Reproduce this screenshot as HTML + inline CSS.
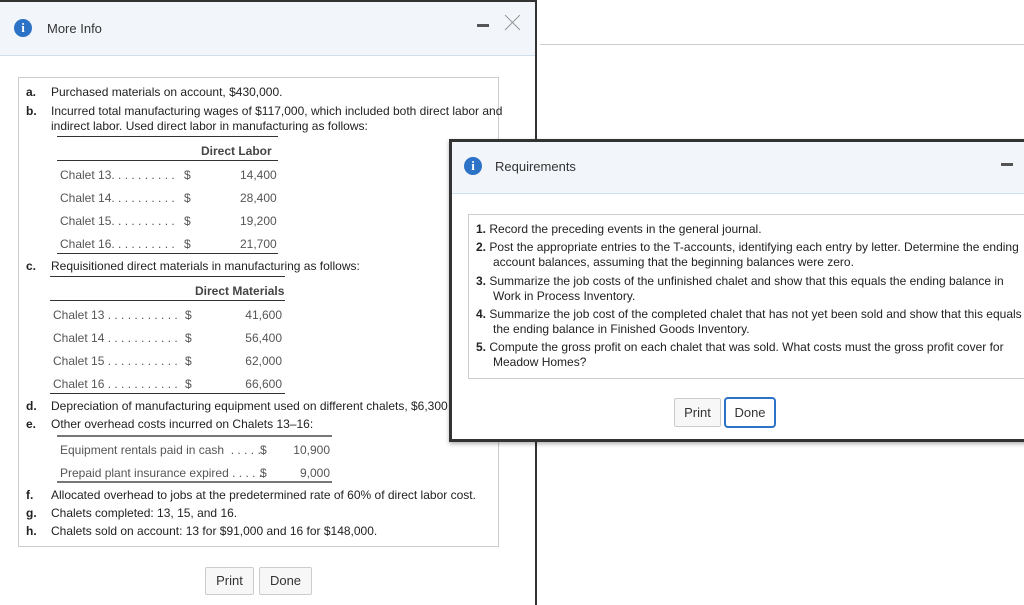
<!DOCTYPE html>
<html><head><style>
*{margin:0;padding:0;box-sizing:border-box}
body{width:1024px;height:605px;overflow:hidden;background:#fff;font-family:"Liberation Sans",sans-serif;color:#222;position:relative;font-size:12px}
.abs{position:absolute;white-space:nowrap}
.hr{position:absolute;height:0;border-top:1px solid #333}
.hrg{position:absolute;height:0;border-top:2px solid #777}
.g{color:#555}
.ic{position:absolute;width:18px;height:18px;border-radius:50%;background:#2c72c7;color:#fff;font:bold 13px "Liberation Serif",serif;text-align:center;line-height:18px}
.btn{position:absolute;border:1px solid #ccc;background:#f7f7f7;border-radius:2px;font-size:13px;color:#333;text-align:center}
.r{font-size:12px;line-height:15px}
</style></head><body>
<div class="abs" style="left:540px;top:44px;width:484px;border-top:1px solid #ccc"></div>
<div style="position:absolute;left:0;top:0;width:537px;height:605px;border-top:2px solid #333;border-right:2px solid #333;background:#fff"></div>
<div style="position:absolute;left:0;top:2px;width:535px;height:54px;background:#f2f6fb;border-bottom:1px solid #cfe0f0"></div>
<div class="ic" style="left:14px;top:19px">i</div>
<div class="abs" style="left:47px;top:21px;font-size:13px;color:#333">More Info</div>
<div class="abs" style="left:477px;top:24px;width:12px;height:3px;background:#555"></div>
<svg class="abs" style="left:504px;top:14px" width="17" height="17"><path d="M1 1L16 16M16 1L1 16" stroke="#999" stroke-width="1"/></svg>
<div style="position:absolute;left:18px;top:77px;width:481px;height:470px;border:1px solid #ccc"></div>
<div class="abs" style="left:26px;top:85px;font-weight:bold">a.</div>
<div class="abs" style="left:51px;top:85px">Purchased materials on account, $430,000.</div>
<div class="abs" style="left:26px;top:104px;font-weight:bold">b.</div>
<div class="abs" style="left:51px;top:104px;line-height:15px">Incurred total manufacturing wages of $117,000, which included both direct labor and<br>indirect labor. Used direct labor in manufacturing as follows:</div>
<div class="hr" style="left:57px;top:136px;width:221px"></div>
<div class="abs" style="left:201px;top:144px;font-weight:bold;color:#444">Direct Labor</div>
<div class="hr" style="left:57px;top:160px;width:221px"></div>
<div class="abs g" style="left:60px;top:168px">Chalet 13. . . . . . . . . .</div><div class="abs g" style="left:184px;top:168px">$</div><div class="abs g" style="left:240px;top:168px;width:36px;text-align:right">14,400</div>
<div class="abs g" style="left:60px;top:191px">Chalet 14. . . . . . . . . .</div><div class="abs g" style="left:184px;top:191px">$</div><div class="abs g" style="left:240px;top:191px;width:36px;text-align:right">28,400</div>
<div class="abs g" style="left:60px;top:214px">Chalet 15. . . . . . . . . .</div><div class="abs g" style="left:184px;top:214px">$</div><div class="abs g" style="left:240px;top:214px;width:36px;text-align:right">19,200</div>
<div class="abs g" style="left:60px;top:237px">Chalet 16. . . . . . . . . .</div><div class="abs g" style="left:184px;top:237px">$</div><div class="abs g" style="left:240px;top:237px;width:36px;text-align:right">21,700</div>
<div class="hr" style="left:57px;top:253px;width:221px"></div>
<div class="abs" style="left:26px;top:259px;font-weight:bold">c.</div>
<div class="abs" style="left:51px;top:259px">Requisitioned direct materials in manufacturing as follows:</div>
<div class="hr" style="left:50px;top:276px;width:235px"></div>
<div class="abs" style="left:195px;top:284px;font-weight:bold;color:#444">Direct Materials</div>
<div class="hr" style="left:50px;top:300px;width:235px"></div>
<div class="abs g" style="left:53px;top:308px">Chalet 13 . . . . . . . . . . .</div><div class="abs g" style="left:185px;top:308px">$</div><div class="abs g" style="left:245px;top:308px;width:37px;text-align:right">41,600</div>
<div class="abs g" style="left:53px;top:331px">Chalet 14 . . . . . . . . . . .</div><div class="abs g" style="left:185px;top:331px">$</div><div class="abs g" style="left:245px;top:331px;width:37px;text-align:right">56,400</div>
<div class="abs g" style="left:53px;top:354px">Chalet 15 . . . . . . . . . . .</div><div class="abs g" style="left:185px;top:354px">$</div><div class="abs g" style="left:245px;top:354px;width:37px;text-align:right">62,000</div>
<div class="abs g" style="left:53px;top:377px">Chalet 16 . . . . . . . . . . .</div><div class="abs g" style="left:185px;top:377px">$</div><div class="abs g" style="left:245px;top:377px;width:37px;text-align:right">66,600</div>
<div class="hr" style="left:50px;top:393px;width:235px"></div>
<div class="abs" style="left:26px;top:399px;font-weight:bold">d.</div>
<div class="abs" style="left:51px;top:399px">Depreciation of manufacturing equipment used on different chalets, $6,300</div>
<div class="abs" style="left:26px;top:417px;font-weight:bold">e.</div>
<div class="abs" style="left:51px;top:417px">Other overhead costs incurred on Chalets 13–16:</div>
<div class="hrg" style="left:57px;top:435px;width:275px"></div>
<div class="abs g" style="left:60px;top:443px">Equipment rentals paid in cash &nbsp;. . . . .</div><div class="abs g" style="left:260px;top:443px">$</div><div class="abs g" style="left:290px;top:443px;width:40px;text-align:right">10,900</div>
<div class="abs g" style="left:60px;top:466px">Prepaid plant insurance expired . . . . .</div><div class="abs g" style="left:260px;top:466px">$</div><div class="abs g" style="left:290px;top:466px;width:40px;text-align:right">9,000</div>
<div class="hrg" style="left:57px;top:481px;width:275px"></div>
<div class="abs" style="left:26px;top:488px;font-weight:bold">f.</div>
<div class="abs" style="left:51px;top:488px">Allocated overhead to jobs at the predetermined rate of 60% of direct labor cost.</div>
<div class="abs" style="left:26px;top:506px;font-weight:bold">g.</div>
<div class="abs" style="left:51px;top:506px">Chalets completed: 13, 15, and 16.</div>
<div class="abs" style="left:26px;top:524px;font-weight:bold">h.</div>
<div class="abs" style="left:51px;top:524px">Chalets sold on account: 13 for $91,000 and 16 for $148,000.</div>
<div class="btn" style="left:205px;top:567px;width:49px;height:28px;line-height:26px">Print</div>
<div class="btn" style="left:259px;top:567px;width:53px;height:28px;line-height:26px">Done</div>
<div style="position:absolute;left:449px;top:139px;width:590px;height:303px;border:3px solid #333;background:#fff;box-shadow:0 2px 4px rgba(0,0,0,.3)"></div>
<div style="position:absolute;left:452px;top:142px;width:572px;height:52px;background:#f2f6fb;border-bottom:1px solid #cfe0f0"></div>
<div class="ic" style="left:464px;top:157px">i</div>
<div class="abs" style="left:495px;top:159px;font-size:13px;color:#333">Requirements</div>
<div class="abs" style="left:1001px;top:163px;width:12px;height:3px;background:#555"></div>
<div style="position:absolute;left:468px;top:214px;width:570px;height:165px;border:1px solid #ccc"></div>
<div class="abs r" style="left:476px;top:222px"><b>1.</b> Record the preceding events in the general journal.</div>
<div class="abs r" style="left:476px;top:240px"><b>2.</b> Post the appropriate entries to the T-accounts, identifying each entry by letter. Determine the ending<br><span style="padding-left:17px">account balances, assuming that the beginning balances were zero.</span></div>
<div class="abs r" style="left:476px;top:274px"><b>3.</b> Summarize the job costs of the unfinished chalet and show that this equals the ending balance in<br><span style="padding-left:17px">Work in Process Inventory.</span></div>
<div class="abs r" style="left:476px;top:307px"><b>4.</b> Summarize the job cost of the completed chalet that has not yet been sold and show that this equals<br><span style="padding-left:17px">the ending balance in Finished Goods Inventory.</span></div>
<div class="abs r" style="left:476px;top:340px"><b>5.</b> Compute the gross profit on each chalet that was sold. What costs must the gross profit cover for<br><span style="padding-left:17px">Meadow Homes?</span></div>
<div class="btn" style="left:674px;top:398px;width:47px;height:29px;line-height:27px">Print</div>
<div class="btn" style="left:724px;top:397px;width:52px;height:31px;line-height:27px;border:2px solid #2c72c7;background:#fff;border-radius:4px">Done</div>
</body></html>
